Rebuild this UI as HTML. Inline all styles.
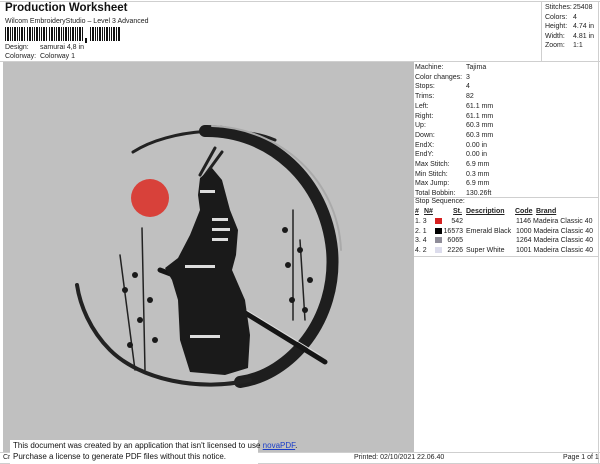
<!DOCTYPE html>
<html><head><meta charset="utf-8"><style>
*{margin:0;padding:0;box-sizing:border-box}
body{width:600px;height:464px;background:#fff;font-family:"Liberation Sans",sans-serif;color:#222;position:relative;overflow:hidden;font-size:7px}
.a{position:absolute;white-space:nowrap}
.ln{position:absolute;background:#cfcfcf}
</style></head><body>
<div class="ln" style="left:0;top:1px;width:600px;height:1px"></div>
<div class="ln" style="left:541px;top:1px;width:1px;height:60px"></div>
<div class="ln" style="left:0;top:61px;width:600px;height:1px"></div>
<div class="ln" style="left:598px;top:1px;width:1px;height:462px"></div>
<div class="a" style="left:5px;top:2px;font-size:11.5px;font-weight:bold;color:#111">Production Worksheet</div>
<div class="a" style="left:5px;top:18px">Wilcom EmbroideryStudio – Level 3 Advanced</div>
<svg class="a" style="left:5px;top:27px" width="120" height="18">
<g fill="#111">
<rect x="0" y="0" width="1" height="14"/><rect x="2" y="0" width="2" height="14"/><rect x="5" y="0" width="1" height="14"/><rect x="7" y="0" width="1" height="14"/><rect x="9" y="0" width="2" height="14"/><rect x="12" y="0" width="1" height="14"/><rect x="14" y="0" width="1" height="14"/><rect x="16" y="0" width="2" height="14"/><rect x="19" y="0" width="1" height="14"/><rect x="22" y="0" width="1" height="14"/><rect x="24" y="0" width="2" height="14"/><rect x="27" y="0" width="1" height="14"/><rect x="29" y="0" width="1" height="14"/><rect x="31" y="0" width="2" height="14"/><rect x="34" y="0" width="1" height="14"/><rect x="36" y="0" width="1" height="14"/><rect x="38" y="0" width="2" height="14"/><rect x="41" y="0" width="1" height="14"/><rect x="44" y="0" width="1" height="14"/><rect x="46" y="0" width="2" height="14"/><rect x="49" y="0" width="1" height="14"/><rect x="51" y="0" width="1" height="14"/><rect x="53" y="0" width="2" height="14"/><rect x="56" y="0" width="1" height="14"/><rect x="58" y="0" width="1" height="14"/><rect x="60" y="0" width="2" height="14"/><rect x="63" y="0" width="1" height="14"/><rect x="65" y="0" width="1" height="14"/><rect x="67" y="0" width="2" height="14"/><rect x="70" y="0" width="1" height="14"/><rect x="72" y="0" width="1" height="14"/><rect x="74" y="0" width="2" height="14"/><rect x="77" y="0" width="1" height="14"/><rect x="80" y="11" width="2" height="5"/><rect x="85" y="0" width="1" height="14"/><rect x="87" y="0" width="2" height="14"/><rect x="90" y="0" width="1" height="14"/><rect x="92" y="0" width="1" height="14"/><rect x="94" y="0" width="2" height="14"/><rect x="97" y="0" width="1" height="14"/><rect x="99" y="0" width="1" height="14"/><rect x="101" y="0" width="2" height="14"/><rect x="104" y="0" width="1" height="14"/><rect x="106" y="0" width="1" height="14"/><rect x="108" y="0" width="2" height="14"/><rect x="111" y="0" width="1" height="14"/><rect x="113" y="0" width="2" height="14"/>
</g></svg>
<div class="a" style="left:5px;top:44px">Design:</div><div class="a" style="left:40px;top:44px">samurai 4,8 in</div>
<div class="a" style="left:5px;top:53px">Colorway:</div><div class="a" style="left:40px;top:53px">Colorway 1</div>

<div class="a" style="left:545px;top:3px;line-height:9.5px">Stitches:<br>Colors:<br>Height:<br>Width:<br>Zoom:</div>
<div class="a" style="left:573px;top:3px;line-height:9.5px">25408<br>4<br>4.74 in<br>4.81 in<br>1:1</div>

<div class="a" style="left:3px;top:62px;width:411px;height:390px;background:#c0c0c0"></div>
<svg class="a" style="left:3px;top:62px" width="411" height="390" viewBox="3 62 411 390">
<g fill="none" stroke-linecap="round">
<path d="M133 152 C170 128 240 125 275 140" stroke="#222" stroke-width="3"/>
<path d="M205 131 C270 130 325 180 332 250 C338 320 290 375 240 382" stroke="#1e1e1e" stroke-width="12"/>
<path d="M212 126 C280 128 338 180 341 250" stroke="#aaa" stroke-width="2"/>
<path d="M250 380 C200 392 140 380 110 350 C90 330 80 305 77 285" stroke="#222" stroke-width="4"/>
<path d="M160 270 L200 285 L325 362" stroke="#151515" stroke-width="5"/>
<path d="M165 268 L200 282 L320 355" stroke="#ddd" stroke-width="1"/>
<path d="M142 228 L145 370 M120 255 L135 370 M293 210 L293 320 M300 240 L305 320" stroke="#222" stroke-width="1.5"/>
<path d="M200 175 L215 148 M203 178 L222 152" stroke="#222" stroke-width="3"/>
</g>
<g fill="#1a1a1a">
<path d="M200 178 L212 168 L222 180 L230 210 L238 230 L236 255 L232 270 L245 300 L250 335 L248 368 L225 375 L190 372 L180 340 L178 300 L172 280 L165 268 L178 258 L190 235 L200 210 L198 195 Z"/>
<circle cx="135" cy="275" r="3"/><circle cx="125" cy="290" r="3"/><circle cx="150" cy="300" r="3"/><circle cx="140" cy="320" r="3"/><circle cx="155" cy="340" r="3"/><circle cx="130" cy="345" r="3"/>
<circle cx="285" cy="230" r="3"/><circle cx="300" cy="250" r="3"/><circle cx="288" cy="265" r="3"/><circle cx="310" cy="280" r="3"/><circle cx="292" cy="300" r="3"/><circle cx="305" cy="310" r="3"/>
</g>
<g fill="#ddd"><rect x="212" y="218" width="16" height="3"/><rect x="212" y="228" width="18" height="3"/><rect x="212" y="238" width="16" height="3"/><rect x="190" y="335" width="30" height="3"/><rect x="185" y="265" width="30" height="3"/><rect x="200" y="190" width="15" height="3"/></g>
<circle cx="150" cy="198" r="19" fill="#d8413a"/>
</svg>

<div class="a" style="left:415px;top:63px;line-height:9.7px">Machine:<br>Color changes:<br>Stops:<br>Trims:<br>Left:<br>Right:<br>Up:<br>Down:<br>EndX:<br>EndY:<br>Max Stitch:<br>Min Stitch:<br>Max Jump:<br>Total Bobbin:</div>
<div class="a" style="left:466px;top:63px;line-height:9.7px">Tajima<br>3<br>4<br>82<br>61.1 mm<br>61.1 mm<br>60.3 mm<br>60.3 mm<br>0.00 in<br>0.00 in<br>6.9 mm<br>0.3 mm<br>6.9 mm<br>130.26ft</div>
<div class="ln" style="left:414px;top:197px;width:185px;height:1px"></div>
<div class="a" style="left:415px;top:198px">Stop Sequence:</div>
<div class="a" style="left:415px;top:208px;font-weight:bold;text-decoration:underline">#</div>
<div class="a" style="left:424px;top:208px;font-weight:bold;text-decoration:underline">N#</div>
<div class="a" style="left:453px;top:208px;font-weight:bold;text-decoration:underline">St.</div>
<div class="a" style="left:466px;top:208px;font-weight:bold;text-decoration:underline">Description</div>
<div class="a" style="left:515px;top:208px;font-weight:bold;text-decoration:underline">Code</div>
<div class="a" style="left:536px;top:208px;font-weight:bold;text-decoration:underline">Brand</div>
<div class="a" style="left:415px;top:217px;line-height:9.6px">1. 3<br>2. 1<br>3. 4<br>4. 2</div>
<div class="a" style="left:435px;top:218px;width:7px;height:6px;background:#d62020"></div>
<div class="a" style="left:435px;top:228px;width:7px;height:6px;background:#000"></div>
<div class="a" style="left:435px;top:237px;width:7px;height:6px;background:#8e8c98"></div>
<div class="a" style="left:435px;top:247px;width:7px;height:6px;background:#dcdcec"></div>
<div class="a" style="left:440px;top:217px;width:23px;text-align:right;line-height:9.6px">542<br>16573<br>6065<br>2226</div>
<div class="a" style="left:466px;top:217px;line-height:9.6px"><br>Emerald Black<br><br>Super White</div>
<div class="a" style="left:516px;top:217px;line-height:9.6px">1146 Madeira Classic 40<br>1000 Madeira Classic 40<br>1264 Madeira Classic 40<br>1001 Madeira Classic 40</div>
<div class="ln" style="left:414px;top:256px;width:185px;height:1px"></div>

<div class="ln" style="left:0;top:452px;width:600px;height:1px"></div>
<div class="ln" style="left:0;top:463px;width:600px;height:1px"></div>
<div class="a" style="left:3px;top:454px">Cr</div>
<div class="a" style="left:354px;top:454px">Printed: 02/10/2021 22.06.40</div>
<div class="a" style="left:563px;top:454px">Page 1 of 1</div>
<div class="a" style="left:10px;top:440px;width:248px;height:24px;background:#fff"></div>
<div class="a" style="left:13px;top:441px;font-size:8px;line-height:10.5px;color:#111">This document was created by an application that isn't licensed to use <span style="color:#1a3dc8;text-decoration:underline">novaPDF</span>.<br>Purchase a license to generate PDF files without this notice.</div>
</body></html>
